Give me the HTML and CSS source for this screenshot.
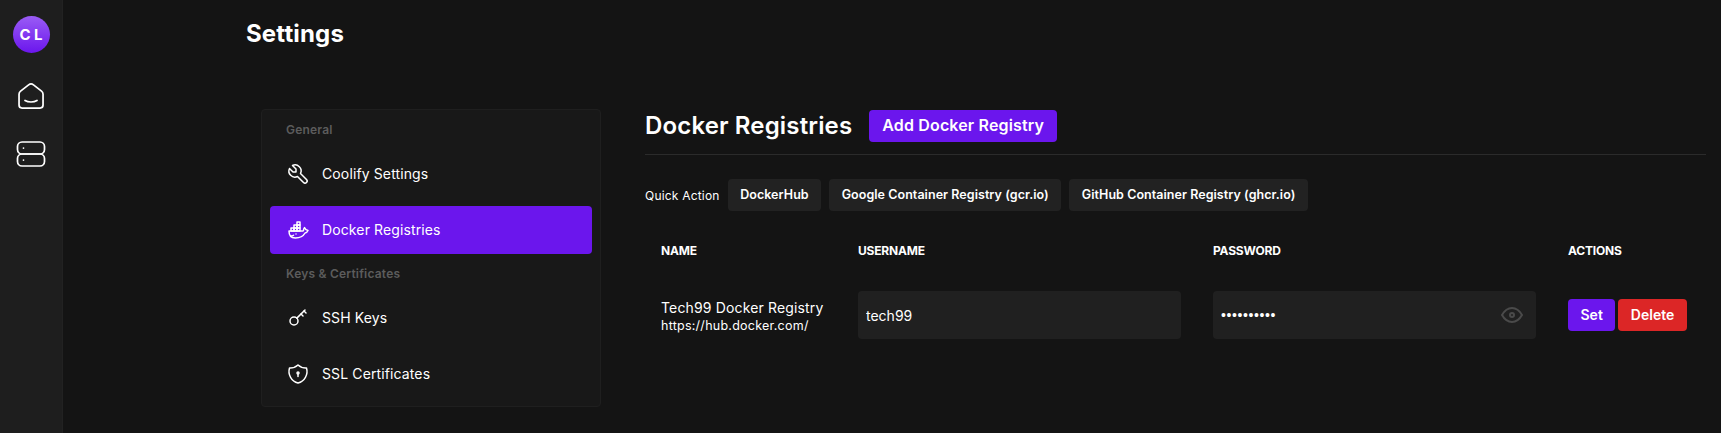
FILE: index.html
```html
<!DOCTYPE html>
<html lang="en">
<head>
<meta charset="utf-8">
<title>Settings</title>
<link rel="stylesheet" href="styles.css">
</head>
<body>
<nav class="rail">
  <div class="logo">C L</div>
  <svg class="rail-icon" viewBox="0 0 24 24"><path d="M19 8.71l-5.333 -4.148a2.666 2.666 0 0 0 -3.274 0l-5.334 4.148a2.665 2.665 0 0 0 -1.029 2.105v7.2a2 2 0 0 0 2 2h12a2 2 0 0 0 2 -2v-7.2c0 -.823 -.38 -1.6 -1.03 -2.105"/><path d="M16 15c-2.21 1.333 -5.792 1.333 -8 0"/></svg>
  <svg class="rail-icon" viewBox="0 0 24 24"><rect x="3" y="4" width="18" height="8" rx="3"/><rect x="3" y="12" width="18" height="8" rx="3"/><path d="M7 8v.01"/><path d="M7 16v.01"/></svg>
</nav>
<main class="page">
  <h1 class="title">Settings</h1>
  <div class="content">
    <aside class="panel">
      <div class="label">General</div>
      <a class="item"><svg class="icon" viewBox="0 0 24 24"><path d="M7 10h3v-3l-3.5 -3.5a6 6 0 0 1 8 8l6 6a2 2 0 0 1 -3 3l-6 -6a6 6 0 0 1 -8 -8l3.5 3.5"/></svg><span class="item-text">Coolify Settings</span></a>
      <a class="item active"><svg class="icon" viewBox="0 0 24 24"><path d="M22 12.54c-1.804 -.345 -2.701 -1.08 -3.523 -2.94c-.487 .696 -1.102 1.568 -.92 2.4c.028 .238 -.32 1 -.557 1h-14c0 5.208 3.164 7 6.196 7c4.124 .022 7.828 -1.376 9.854 -5c1.146 -.101 2.296 -1 2.95 -2.46z"/><path d="M5 10h3v3h-3z"/><path d="M8 10h3v3h-3z"/><path d="M11 10h3v3h-3z"/><path d="M8 7h3v3h-3z"/><path d="M11 7h3v3h-3z"/><path d="M11 4h3v3h-3z"/><path d="M4.571 18c1.5 0 2.047 -.074 2.958 -.78"/><path d="M10 16l0 .01"/></svg><span class="item-text">Docker Registries</span></a>
      <div class="label">Keys &amp; Certificates</div>
      <a class="item"><svg class="icon" viewBox="0 0 24 24"><circle cx="8" cy="15" r="4"/><path d="M10.85 12.15l8.15 -8.15"/><path d="M18 5l2 2"/><path d="M15 8l2 2"/></svg><span class="item-text">SSH Keys</span></a>
      <a class="item"><svg class="icon" viewBox="0 0 24 24"><path d="M12 3a12 12 0 0 0 8.5 3a12 12 0 0 1 -8.5 15a12 12 0 0 1 -8.5 -15a12 12 0 0 0 8.5 -3"/><circle cx="12" cy="11" r="1"/><path d="M12 12v2.5"/></svg><span class="item-text">SSL Certificates</span></a>
    </aside>
    <section class="registries">
      <header class="head">
        <h2 class="head-title">Docker Registries</h2>
        <button class="btn btn-primary btn-add">Add Docker Registry</button>
      </header>
      <div class="quick">
        <span class="quick-label">Quick Action</span>
        <button class="btn btn-dark">DockerHub</button>
        <button class="btn btn-dark">Google Container Registry (gcr.io)</button>
        <button class="btn btn-dark">GitHub Container Registry (ghcr.io)</button>
      </div>
      <div class="table">
        <div class="th">Name</div>
        <div class="th">Username</div>
        <div class="th">Password</div>
        <div class="th">Actions</div>
        <div class="td td-name"><div class="reg-name">Tech99 Docker Registry</div><div class="reg-url">https://hub.docker.com/</div></div>
        <div class="td"><input class="field" type="text" value="tech99" readonly></div>
        <div class="td"><div class="pw"><input class="field field-pw" type="password" value="tech99pass" readonly><svg class="eye" viewBox="0 0 24 24"><circle cx="12" cy="12" r="2"/><path d="M22 12c-2.667 4.667 -6 7 -10 7s-7.333 -2.333 -10 -7c2.667 -4.667 6 -7 10 -7s7.333 2.333 10 7"/></svg></div></div>
        <div class="td td-actions"><button class="btn btn-primary btn-act">Set</button><button class="btn btn-danger btn-act">Delete</button></div>
      </div>
    </section>
  </div>
</main>
</body>
</html>
```
FILE: styles.css
```css
* { box-sizing: border-box; }
html, body { margin: 0; height: 100%; }
body {
  display: flex;
  height: 433px;
  overflow: hidden;
  background: #141414;
  color: #fff;
  font-family: Inter, "Liberation Sans", sans-serif;
}
svg { fill: none; stroke: currentColor; stroke-linecap: round; stroke-linejoin: round; flex: none; }

.rail {
  width: 63px;
  flex: none;
  background: #1e1e1e;
  border-right: 1px solid #222;
  display: flex;
  flex-direction: column;
  align-items: center;
  padding-top: 16px;
}
.logo {
  width: 37px;
  height: 37px;
  border-radius: 50%;
  background: linear-gradient(180deg, #9a5cf5 0%, #6b16ed 100%);
  display: flex;
  align-items: center;
  justify-content: center;
  font-size: 15px;
  font-weight: 700;
  word-spacing: 0;
  margin-bottom: 25px;
}
.rail-icon { width: 36px; height: 36px; stroke-width: 1.15; margin-bottom: 22px; }

.page { flex: 1; min-width: 0; padding: 0 15px 0 182px; }
.title { margin: 0 0 0 1px; height: 68px; line-height: 67px; font-size: 24px; font-weight: 700; letter-spacing: .15px; }
.content { display: flex; margin: 41px 0 0 16px; gap: 44px; align-items: flex-start; }

.panel {
  width: 340px;
  flex: none;
  background: #181818;
  border: 1px solid #1f1f1f;
  border-radius: 4px;
  padding: 8px;
  display: flex;
  flex-direction: column;
  gap: 8px;
}
.label { height: 24px; padding-left: 16px; line-height: 24px; font-size: 12px; font-weight: 600; color: #5c5c5c; letter-spacing: .2px; }
.item {
  height: 48px;
  display: flex;
  align-items: center;
  gap: 12px;
  padding: 0 16px;
  font-size: 14px;
  letter-spacing: .12px;
  border-radius: 4px;
}
.item-text { margin-bottom: 2px; }
.item.active { background: #6b16ed; }
.icon { width: 24px; height: 24px; stroke-width: 1.5; }

.registries { flex: 1; min-width: 0; padding-top: 1px; }
.head {
  display: flex;
  align-items: center;
  gap: 17px;
  height: 45px;
  padding-bottom: 12px;
  border-bottom: 1px solid #2b2b2b;
}
.head-title { margin: 0 0 2px; font-size: 24px; font-weight: 600; letter-spacing: .15px; }
.btn {
  height: 32px;
  border: 0;
  border-radius: 4px;
  padding: 0 12.5px 1px;
  color: #fff;
  font-family: inherit;
  font-size: 12.5px;
  font-weight: 600;
  letter-spacing: .05px;
}
.btn-primary { background: #6b16ed; }
.btn-add { font-size: 16px; letter-spacing: .15px; padding: 0 13px 2px; }
.btn-act { font-size: 14px; letter-spacing: 0; }
.btn-dark { background: #222; }
.btn-danger { background: #dc2626; }

.quick { display: flex; align-items: center; gap: 8px; margin-top: 24px; font-size: 12px; letter-spacing: .2px; }

.table { display: grid; grid-template-columns: 197px 355px 355px auto; margin-top: 16px; }
.th { padding: 12px 16px 0; height: 40px; line-height: 24px; font-size: 12px; font-weight: 700; text-transform: uppercase; letter-spacing: -.2px; }
.td { padding: 8px 16px; height: 64px; margin-top: 16px; display: flex; align-items: center; }
.td-name { display: block; padding: 15px 0 0 16px; white-space: nowrap; }
.reg-name { font-size: 14px; line-height: 20px; letter-spacing: .15px; }
.reg-url { font-size: 12.5px; line-height: 16px; letter-spacing: .25px; }
.td-actions { gap: 3px; white-space: nowrap; }

.field {
  width: 100%;
  height: 48px;
  border: 0;
  outline: 0;
  border-radius: 4px;
  background: #202020;
  color: #fff;
  padding: 0 8px;
  font-family: inherit;
  font-size: 14px;
}
.field-pw { font-family: "Liberation Sans", sans-serif; letter-spacing: .6px; }
.pw { width: 100%; position: relative; }
.eye { position: absolute; top: 12px; right: 12px; width: 24px; height: 24px; stroke-width: 2; color: #4a4a4a; }
```
